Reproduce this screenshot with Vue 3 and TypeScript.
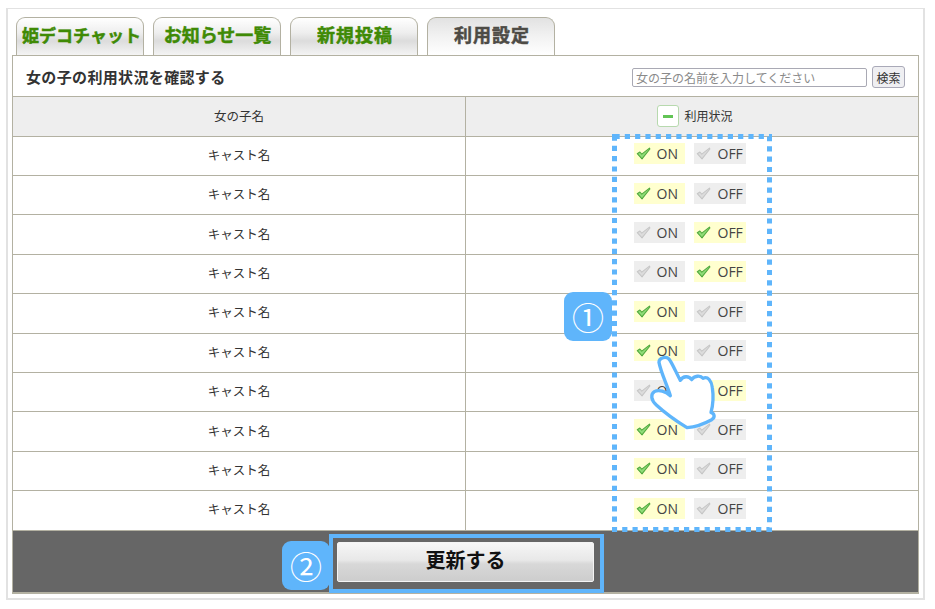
<script setup lang="ts">
const tabs = [
  { label: '姫デコチャット', cls: 'tight', active: false },
  { label: 'お知らせ一覧', cls: '', active: false },
  { label: '新規投稿', cls: 'wide', active: false },
  { label: '利用設定', cls: 'wide', active: true },
]
const states: boolean[] = [true, true, false, false, true, true, false, true, true, true]
const checkPath = 'M1.2 6.2 L3.6 4.6 L5.4 6.6 L12.6 1 L13 1.8 L5.6 11 Z'
</script>

<template>
  <div class="frame">
    <div class="tabs">
      <div v-for="t in tabs" :key="t.label" class="tab" :class="[t.cls, { active: t.active }]">{{ t.label }}</div>
    </div>
    <div class="panel">
      <div class="head">
        <h2 class="title">女の子の利用状況を確認する</h2>
        <div class="search">
          <input class="input" type="text" placeholder="女の子の名前を入力してください" />
          <button class="sbtn" type="button">検索</button>
        </div>
      </div>
      <div class="row thead">
        <div class="c1">女の子名</div>
        <div class="c2 thc">
          <span class="minus"><i></i></span>
          <span class="thl">利用状況</span>
        </div>
      </div>
      <div v-for="(on, i) in states" :key="i" class="row">
        <div class="c1 name">キャスト名</div>
        <div class="c2">
          <div class="pair">
            <span class="tg ton" :class="{ sel: on }">
              <svg class="ck" viewBox="0 0 14 12" width="15" height="13">
                <path :d="checkPath" :fill="on ? '#8fdc78' : '#dcdcdc'" :stroke="on ? '#4fa83c' : '#c6c6c6'" stroke-width="1" stroke-linejoin="round" />
              </svg>
              <span>ON</span>
            </span>
            <span class="tg toff" :class="{ sel: !on }">
              <svg class="ck" viewBox="0 0 14 12" width="15" height="13">
                <path :d="checkPath" :fill="!on ? '#8fdc78' : '#dcdcdc'" :stroke="!on ? '#4fa83c' : '#c6c6c6'" stroke-width="1" stroke-linejoin="round" />
              </svg>
              <span>OFF</span>
            </span>
          </div>
        </div>
      </div>
      <div class="foot">
        <button class="update" type="button">更新する</button>
      </div>
    </div>

    <svg class="dots" width="160" height="398" viewBox="0 0 160 398">
      <rect x="2.5" y="2.5" width="155" height="393" fill="none" stroke="#5fb5fb" stroke-width="5" stroke-dasharray="5.2 5.1" />
    </svg>
    <div class="badge b1">①</div>
    <div class="badge b2">②</div>
    <div class="hl"></div>
    <svg class="hand" width="220" height="160" viewBox="0 0 660 480">
      <path d="M312 250 C312 236 336 228 345 244 C356 262 366 286 376 304 C384 290 402 290 410 302 C418 290 436 288 444 298 C458 290 470 306 472 326 C476 352 474 378 468 400 C478 404 482 414 470 422 C448 434 422 444 396 446 C370 430 330 402 304 378 C288 364 286 346 298 338 C312 330 332 338 346 350 C336 316 318 282 312 250 Z" fill="#fff" stroke="#5fb5fb" stroke-width="10" stroke-linejoin="round" />
    </svg>
  </div>
</template>

<style>
body { margin: 0; background: #fff; }
</style>

<style scoped>
.frame {
  position: absolute;
  left: 6px;
  top: 8px;
  width: 919px;
  height: 592px;
  box-sizing: border-box;
  border: 2px solid #e2e2e2;
  border-width: 1px 2px 2px 2px;
  padding: 8px 4px 0;
  font-family: "Noto Sans CJK JP", "Noto Sans", sans-serif;
  color: #333;
  background: #fff;
}
.tabs { display: flex; gap: 9px; height: 38px; padding-left: 4px; }
.tab {
  width: 128px;
  box-sizing: border-box;
  border: 1px solid #b3b1a2;
  border-bottom: 0;
  border-radius: 9px 9px 0 0;
  background: linear-gradient(#fff 0%, #eee 40%, #dcdcdc 62%, #f4f4f4 100%);
  display: flex;
  align-items: center;
  justify-content: center;
  color: #3f8a05;
  font-size: 18px;
  font-weight: 700;
  -webkit-text-stroke: 0.5px currentColor;
  line-height: 1;
  padding: 0 0 5px 1px;
}
.tab.tight { font-size: 17px; padding-left: 3px; }
.tab.wide { letter-spacing: 1px; padding-left: 2px; }
.tab.active {
  background: linear-gradient(#e2e2e2 0%, #f2f2f2 50%, #fff 100%);
  color: #4d4b45;
}
.panel {
  border: 1px solid #b3b1a2;
  border-bottom-width: 2px;
  height: 539px;
  box-sizing: border-box;
  display: flex;
  flex-direction: column;
}
.head {
  height: 41px;
  box-sizing: border-box;
  border-bottom: 1px solid #b3b1a2;
  display: flex;
  align-items: center;
  justify-content: space-between;
  padding: 2px 13px 0 13px;
}
.title { margin: -2px 0 0; font-size: 15px; font-weight: 700; letter-spacing: 0.35px; color: #333; }
.search { display: flex; align-items: center; gap: 5px; }
.input {
  width: 235px;
  height: 19px;
  box-sizing: border-box;
  border: 1px solid #a9a9b4;
  border-radius: 2px;
  padding: 0 3px;
  font: 12px "Noto Sans CJK JP", sans-serif;
  outline: none;
}
.input::placeholder { color: #8a8a8a; opacity: 1; }
.sbtn {
  width: 33px;
  height: 22px;
  padding: 0;
  box-sizing: border-box;
  border: 1px solid #a9a9b8;
  border-radius: 3px;
  background: #efeff2;
  font: 12px "Noto Sans CJK JP", sans-serif;
  color: #333;
}
.row {
  display: flex;
  height: 39.4px;
  flex: none;
  box-sizing: border-box;
  border-bottom: 1px solid #b3b1a2;
}
.row.thead { background: #eee; height: 39.6px; }
.c1 {
  width: 453px;
  box-sizing: border-box;
  border-right: 1px solid #b3b1a2;
  display: flex;
  align-items: center;
  justify-content: center;
  font-size: 12.5px;
  padding-bottom: 3px;
}
.thead .c1 { padding-bottom: 2px; }
.c2 {
  flex: 1;
  display: flex;
  align-items: center;
  justify-content: center;
  padding-right: 5px;
}
.thc { font-size: 12px; gap: 5px; padding-right: 0; padding-left: 6px; }
.thl { margin-bottom: 1px; }
.minus {
  width: 22px;
  height: 22px;
  box-sizing: border-box;
  background: #fff;
  border: 1px solid #b7d9ae;
  border-radius: 3px;
  display: flex;
  align-items: center;
  justify-content: center;
}
.minus i { display: block; width: 10px; height: 3px; background: #62c455; }
.pair { display: flex; gap: 9px; margin-top: -4px; }
.tg {
  height: 21px;
  background: #eee;
  display: flex;
  align-items: center;
  box-sizing: border-box;
  padding-left: 2px;
  font-family: "Open Sans", "Noto Sans", sans-serif;
  font-size: 14px;
  color: #444;
}
.tg.sel { background: #ffffcf; }
.ton { width: 51px; gap: 6px; }
.toff { width: 52px; gap: 7px; }
.ck { flex: none; }
.foot {
  flex: 1;
  background: #666;
  display: flex;
  justify-content: center;
  align-items: flex-start;
  padding-top: 11px;
}
.update {
  width: 257px;
  height: 40px;
  box-sizing: border-box;
  border: 1px solid #f4f4f4;
  border-radius: 2px;
  background: linear-gradient(#f6f6f6 0%, #e8e8e8 45%, #d8d8d8 55%, #cdcdcd 100%);
  font: 700 20px "Noto Sans CJK JP", sans-serif;
  color: #111;
  padding: 0 0 4px;
}
.dots { position: absolute; left: 604px; top: 125px; }
.badge {
  position: absolute;
  width: 48px;
  height: 49px;
  border-radius: 9px;
  background: #5fb5fb;
  color: #fff;
  font: 32px "Noto Sans CJK JP", sans-serif;
  display: flex;
  align-items: center;
  justify-content: center;
  padding-bottom: 2px;
  box-sizing: border-box;
}
.b1 { left: 556px; top: 283px; }
.b2 { left: 274px; top: 532px; }
.hl {
  position: absolute;
  left: 321px;
  top: 525px;
  width: 275px;
  height: 59px;
  box-sizing: border-box;
  border: 4px solid #5fb5fb;
}
.hand { position: absolute; left: 547px; top: 270px; }
</style>
